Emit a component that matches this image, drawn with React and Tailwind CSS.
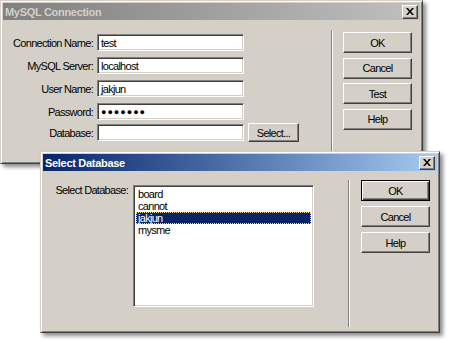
const win =
  "absolute flex flex-col p-[2px] bg-[#d4d0c8] border border-t-[#d4d0c8] border-l-[#d4d0c8] border-r-[#404040] border-b-[#404040] shadow-[inset_1px_1px_#fff,inset_-1px_-1px_#808080,3px_3px_4px_rgba(0,0,0,0.45)]";
const raised =
  "flex items-center justify-center bg-[#d4d0c8] border border-t-white border-l-white border-r-[#404040] border-b-[#404040] shadow-[inset_-1px_-1px_#808080]";
const sunken =
  "bg-white border border-t-[#808080] border-l-[#808080] border-r-white border-b-white shadow-[inset_1px_1px_#404040,inset_-1px_-1px_#d4d0c8]";

function CloseBox() {
  return (
    <div className={`${raised} w-[16px] h-[14px]`}>
      <svg width="8" height="7" viewBox="0 0 8 7">
        <path d="M0 0h2l2 2.5L6 0h2L5 3.5 8 7H6L4 4.5 2 7H0l3-3.5z" fill="#000" />
      </svg>
    </div>
  );
}

function Button({ label, isDefault }) {
  if (isDefault) {
    return (
      <div className="w-[69px] h-[21px] flex items-center justify-center bg-[#d4d0c8] border border-black shadow-[inset_1px_1px_#fff,inset_-1px_-1px_#404040,inset_-2px_-2px_#808080]">
        {label}
      </div>
    );
  }
  return <div className={`${raised} w-[69px] h-[21px]`}>{label}</div>;
}

function Field({ label, value, children, className = "" }) {
  return (
    <div className={`flex items-center h-[17px] ${className}`}>
      <div className="w-[90px] text-right">{label}</div>
      <div className={`${sunken} ml-[4px] w-[147px] h-[17px] flex items-center pl-[3px]`}>{value}</div>
      {children}
    </div>
  );
}

export default function App() {
  const dbs = ["board", "cannot", "jakjun", "mysme"];

  return (
    <div className="relative w-[450px] h-[340px] bg-white overflow-hidden font-['Liberation_Sans',Arial,sans-serif] text-[11px] leading-[12px] text-black tracking-[-0.7px]">
      {/* MySQL Connection (inactive) */}
      <div className={`${win} left-0 top-0 w-[423px] h-[164px]`}>
        <div className="h-[17px] flex items-center justify-between pl-[2px] pr-[2px] bg-gradient-to-r from-[#808080] to-[#c0c0c0]">
          <span className="font-bold text-[#d4d0c8] tracking-[-0.3px]">MySQL Connection</span>
          <CloseBox />
        </div>
        <div className="flex">
          <div className="flex flex-col gap-[6px] pt-[14px]">
            <Field label="Connection Name:" value="test" />
            <Field label="MySQL Server:" value="localhost" />
            <Field label="User Name:" value="jakjun" />
            <Field
              label="Password:"
              value={<span className="text-[9px] tracking-[1px]">●●●●●●●</span>}
            />
            <Field label="Database:" value="" className="mt-[-2px]">
              <div className={`${raised} ml-[4px] w-[51px] h-[19px]`}>Select...</div>
            </Field>
          </div>
          <div className="ml-[32px] mt-[10px] w-[2px] h-[122px] border-l border-l-[#808080] border-r border-r-white" />
          <div className="ml-[10px] mt-[12px] flex flex-col gap-[4.5px]">
            <Button label="OK" />
            <Button label="Cancel" />
            <Button label="Test" />
            <Button label="Help" />
          </div>
        </div>
      </div>

      {/* Select Database (active) */}
      <div className={`${win} left-[40px] top-[151px] w-[400px] h-[182px]`}>
        <div className="h-[17px] flex items-center justify-between pl-[2px] pr-[2px] bg-gradient-to-r from-[#0a246a] to-[#a6caf0]">
          <span className="font-bold text-white tracking-[-0.3px]">Select Database</span>
          <CloseBox />
        </div>
        <div className="flex items-start">
          <div className="w-[85px] mt-[13px] text-right">Select Database:</div>
          <div className={`${sunken} ml-[5px] mt-[14px] w-[181px] h-[122px] p-[2px] flex flex-col`}>
            {dbs.map((d) =>
              d === "jakjun" ? (
                <div
                  key={d}
                  className="h-[12px] flex items-center pl-[1px] bg-[#0a246a] text-white border border-dotted border-[#f0d890]"
                >
                  {d}
                </div>
              ) : (
                <div key={d} className="h-[12px] flex items-center pl-[2px]">
                  {d}
                </div>
              )
            )}
          </div>
          <div className="ml-[34px] mt-[9px] w-[2px] h-[147px] border-l border-l-[#808080] border-r border-r-white" />
          <div className="ml-[11px] mt-[9px] flex flex-col gap-[5px]">
            <Button label="OK" isDefault />
            <Button label="Cancel" />
            <Button label="Help" />
          </div>
        </div>
      </div>
    </div>
  );
}
